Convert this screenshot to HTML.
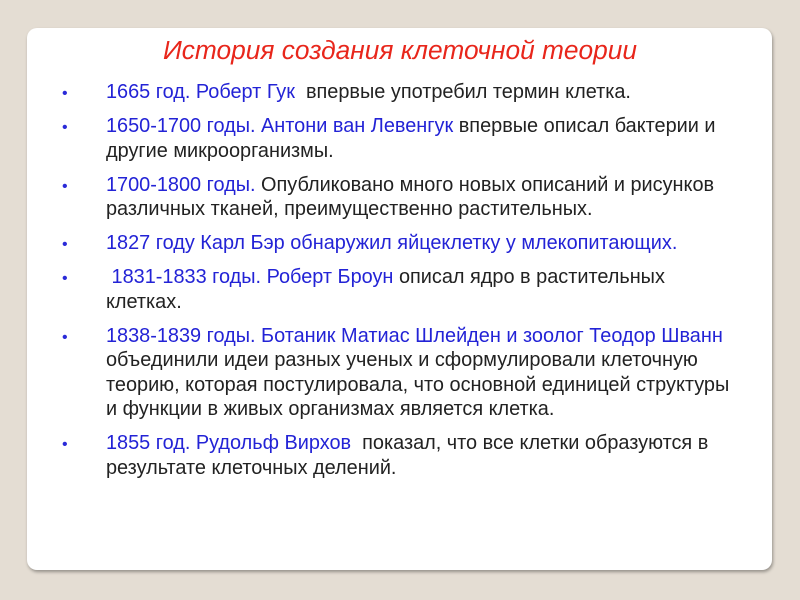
<!DOCTYPE html>
<html><head><meta charset="utf-8"><style>
html,body{margin:0;padding:0}
body{width:800px;height:600px;background:#e4ddd3;position:relative;overflow:hidden;font-family:"Liberation Sans",sans-serif}
.card{position:absolute;left:27px;top:28px;width:745px;height:542px;background:#fff;border-radius:10px;box-shadow:1px 2px 3px rgba(0,0,0,0.35)}
h1{position:absolute;left:0;width:800px;top:35px;margin:0;text-align:center;font-style:italic;font-weight:normal;font-size:26.3px;color:#e8261b}
ul{position:absolute;left:62px;top:80px;margin:0;padding:0;list-style:none;width:710px}
li{position:relative;padding-left:44px;font-size:19.9px;line-height:24.5px;color:#222;margin-bottom:9.5px;white-space:nowrap}
li:before{content:"•";position:absolute;left:0;top:2px;color:#2a2ad8;font-size:16px}
.b{color:#2323d6}
</style></head><body>
<div class="card"></div>
<h1>История создания клеточной теории</h1>
<ul>
<li><span class="b">1665 год. Роберт Гук</span>&nbsp; впервые употребил термин клетка.</li>
<li><span class="b">1650-1700 годы. Антони ван Левенгук</span> впервые описал бактерии и<br>другие микроорганизмы.</li>
<li><span class="b">1700-1800 годы.</span> Опубликовано много новых описаний и рисунков<br>различных тканей, преимущественно растительных.</li>
<li><span class="b">1827 году Карл Бэр обнаружил яйцеклетку у млекопитающих.</span></li>
<li>&nbsp;<span class="b">1831-1833 годы. Роберт Броун</span> описал ядро в растительных<br>клетках.</li>
<li><span class="b">1838-1839 годы. Ботаник Матиас Шлейден и зоолог Теодор Шванн</span><br>объединили идеи разных ученых и сформулировали клеточную<br>теорию, которая постулировала, что основной единицей структуры<br>и функции в живых организмах является клетка.</li>
<li><span class="b">1855 год. Рудольф Вирхов</span>&nbsp; показал, что все клетки образуются в<br>результате клеточных делений.</li>
</ul>
</body></html>
